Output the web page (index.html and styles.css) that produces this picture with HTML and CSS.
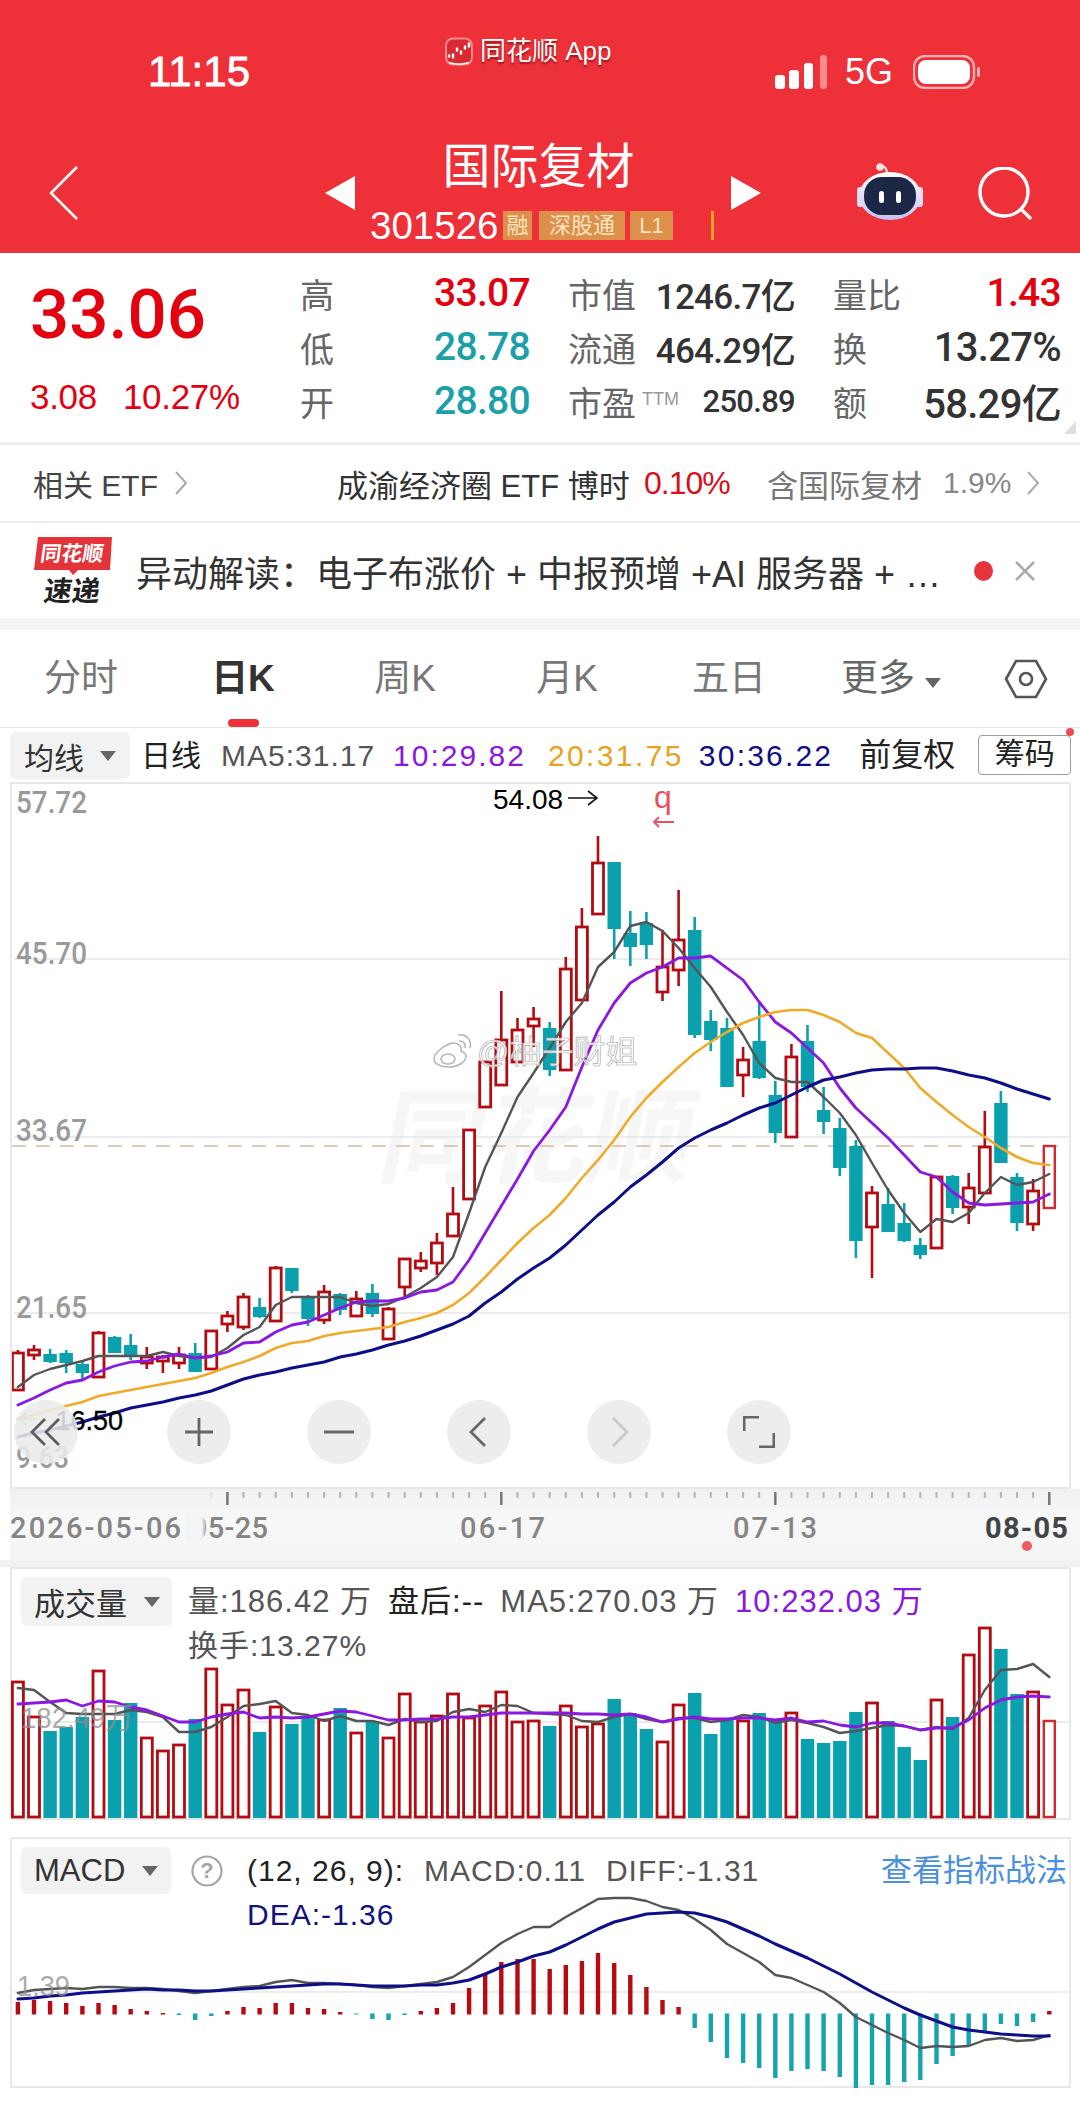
FILE: index.html
```html
<!DOCTYPE html>
<html lang="zh">
<head>
<meta charset="utf-8">
<title>国际复材</title>
<link rel="stylesheet" href="styles.css">
</head>
<body>
<div class="app">
  <header class="top">
    <div class="status">
      <span class="time">11:15</span>
      <div class="app-mark">
        <svg class="app-logo" viewBox="0 0 28 28"><rect x="1" y="1" width="26" height="26" rx="7" fill="#d92a33" stroke="#f78a8f" stroke-width="2"/><path d="M4 20v-3M8 21v-5M12 14v-4M16 17v-4M20 12V8M24 10V5" stroke="#fff" stroke-width="2.4" fill="none"/><path d="M4 25c6 2 14 2 20 0" stroke="#fff" stroke-width="1.5" fill="none"/></svg>
        <span class="app-name">同花顺 App</span>
      </div>
      <div class="status-right">
        <svg class="signal" viewBox="0 0 52 34"><rect x="0" y="20" width="10" height="14" rx="3" fill="#fff"/><rect x="14" y="15" width="10" height="19" rx="3" fill="#fff"/><rect x="29" y="8" width="9" height="26" rx="3" fill="#fff"/><rect x="45" y="0" width="7" height="34" rx="3" fill="#f78a8f"/></svg>
        <span class="net">5G</span>
        <svg class="battery" viewBox="0 0 68 34"><rect x="1" y="1" width="60" height="32" rx="11" fill="none" stroke="#fbb0b3" stroke-width="2.4"/><rect x="5" y="5" width="52" height="24" rx="8" fill="#fff"/><rect x="64" y="12" width="3" height="10" rx="1.5" fill="#fbb0b3"/></svg>
      </div>
    </div>
    <nav class="nav">
      <svg class="back" viewBox="0 0 30 56"><path d="M28 2 2 28l26 26" fill="none" stroke="#fff" stroke-width="2.6"/></svg>
      <svg class="tri tri-l" viewBox="0 0 30 34"><path d="M30 0v34L0 17z" fill="#fff"/></svg>
      <div class="title-block">
        <div class="stock-name">国际复材</div>
        <div class="code-row">
          <span class="code">301526</span>
          <span class="tag tag-rong">融</span>
          <span class="tag tag-sg">深股通</span>
          <span class="tag tag-l1">L1</span>
          <i class="code-bar"></i>
        </div>
      </div>
      <svg class="tri tri-r" viewBox="0 0 30 34"><path d="M0 0v34l30-17z" fill="#fff"/></svg>
      <svg class="robot" viewBox="0 0 66 58">
        <defs><linearGradient id="helmet" x1="0" y1="0" x2="0" y2="1"><stop offset="0" stop-color="#fff"/><stop offset="1" stop-color="#c5c3f2"/></linearGradient></defs>
        <path d="M30 11c0-6-2-8-7-8" fill="none" stroke="#f4dfe6" stroke-width="2.4"/><circle cx="23" cy="4" r="3.800" fill="#fbe4e8"/>
        <rect x="0" y="24" width="7" height="20" rx="3" fill="#dfdaf2"/><rect x="59" y="24" width="7" height="20" rx="3" fill="#dfdaf2"/>
        <ellipse cx="33" cy="33" rx="31" ry="24" fill="url(#helmet)"/>
        <rect x="7" y="14" width="52" height="38" rx="18" fill="#1c2745"/>
        <rect x="22" y="28" width="5" height="12" rx="2.500" fill="#fff"/><rect x="39" y="28" width="5" height="12" rx="2.500" fill="#fff"/>
      </svg>
      <svg class="search" viewBox="0 0 54 54"><circle cx="26" cy="25" r="24" fill="none" stroke="#fff" stroke-width="3.400"/><path d="M43 42l10 10" stroke="#fff" stroke-width="3.400"/></svg>
    </nav>
  </header>

  <section class="quote">
    <div class="quote-main">
      <div class="price">33.06</div>
      <div class="change"><span>3.08</span><span>10.27%</span></div>
    </div>
    <div class="quote-grid">
      <div class="cell"><span class="lab">高</span><span class="val red">33.07</span></div>
      <div class="cell"><span class="lab">市值</span><span class="val mid">1246.7亿</span></div>
      <div class="cell"><span class="lab">量比</span><span class="val red">1.43</span></div>
      <div class="cell"><span class="lab">低</span><span class="val teal">28.78</span></div>
      <div class="cell"><span class="lab">流通</span><span class="val mid">464.29亿</span></div>
      <div class="cell"><span class="lab">换</span><span class="val dark">13.27%</span></div>
      <div class="cell"><span class="lab">开</span><span class="val teal">28.80</span></div>
      <div class="cell"><span class="lab">市盈<sup class="ttm">TTM</sup></span><span class="val small">250.89</span></div>
      <div class="cell"><span class="lab">额</span><span class="val dark">58.29亿</span></div>
    </div>
    <i class="corner"></i>
  </section>

  <section class="etf">
    <span class="etf-rel">相关 ETF</span>
    <svg class="chev" viewBox="0 0 14 26"><path d="M2 2l10 11L2 24" fill="none" stroke="#aaa" stroke-width="2"/></svg>
    <span class="etf-name">成渝经济圈 ETF 博时</span>
    <span class="etf-pct">0.10%</span>
    <span class="etf-inc">含国际复材</span>
    <span class="etf-w">1.9%</span>
    <svg class="chev chev-end" viewBox="0 0 14 26"><path d="M2 2l10 11L2 24" fill="none" stroke="#aaa" stroke-width="2"/></svg>
  </section>

  <section class="news">
    <svg class="news-logo" viewBox="0 0 78 70">
      <path d="M4 1h74l-2 33H44l-5 5-4-5H0z" fill="#e5333a"/>
      <text class="news-logo-a" x="6" y="25" transform="skewX(-8) translate(3 0)">同花顺</text>
      <text class="news-logo-b" x="10" y="65" transform="skewX(-8) translate(8 0)">速递</text>
    </svg>
    <div class="news-text">异动解读：电子布涨价 + 中报预增 +AI 服务器 + …</div>
    <i class="news-dot"></i>
    <svg class="news-x" viewBox="0 0 20 20"><path d="M1 1l18 18M19 1 1 19" stroke="#aaa" stroke-width="2.600"/></svg>
  </section>

  <nav class="tabs">
    <span class="tab">分时</span>
    <span class="tab active">日K</span>
    <span class="tab">周K</span>
    <span class="tab">月K</span>
    <span class="tab">五日</span>
    <span class="tab tab-more">更多<i class="caret caret-sm"></i></span>
    <svg class="hex" viewBox="0 0 44 40"><path d="M12 2h20l10 18-10 18H12L2 20z" fill="none" stroke="#555" stroke-width="2.600"/><circle cx="22" cy="20" r="6" fill="none" stroke="#555" stroke-width="2.600"/></svg>
  </nav>

  <div class="ma-row">
    <span class="dd dd-ma">均线<i class="caret"></i></span>
    <span class="ma-t ma-day">日线</span>
    <span class="ma ma5">MA5:31.17</span>
    <span class="ma ma10">10:29.82</span>
    <span class="ma ma20">20:31.75</span>
    <span class="ma ma30">30:36.22</span>
    <span class="ma-t ma-adj">前复权</span>
    <span class="chips">筹码</span>
    <i class="chips-dot"></i>
  </div>

  <section class="panel kline">
    <svg class="chart" viewBox="10 782 1061 707" width="1061" height="707">
      <text class="wm-big" x="625" y="1175" transform="skewX(-12)">同花顺</text>
      <g class="grid"><path d="M14 959H1069M14 1137H1069M14 1313H1069"/></g>
      <path class="last-line" d="M12 1146H1066"/>
      <g id="kBody"></g>
      <text class="ax" x="16" y="813" textLength="71" lengthAdjust="spacingAndGlyphs">57.72</text>
      <text class="ax" x="16" y="964" textLength="71" lengthAdjust="spacingAndGlyphs">45.70</text>
      <text class="ax" x="16" y="1141" textLength="71" lengthAdjust="spacingAndGlyphs">33.67</text>
      <text class="ax" x="16" y="1318" textLength="71" lengthAdjust="spacingAndGlyphs">21.65</text>
      <text class="ax" x="16" y="1468" textLength="53" lengthAdjust="spacingAndGlyphs">9.63</text>
      <text class="peak" x="493" y="809">54.08</text>
      <path class="peak-arrow" d="M568 798H597m-9-7 9 7-9 7"/>
      <text class="mark" x="654" y="808">q</text>
      <path class="mark-arrow" d="M674 822H654m5-5-5 5 5 5"/>
      <path class="low-arrow" d="M37 1419H20m6-6-6 6 6 6"/>
      <text class="low" x="123" y="1430">16.50</text>
      <g class="weibo">
        <path d="M452 1043c-10 3-18 11-18 16 0 5 7 8 15 8 9 0 17-5 17-11 0-3-3-4-5-5 1-4-1-8-9-8z"/>
        <ellipse cx="448" cy="1059" rx="7" ry="5"/>
        <path d="M459 1041c4 0 7 2 6 7M458 1035c8-1 14 4 12 13"/>
        <text class="wb-text" x="477" y="1063">@柚子财姐</text>
      </g>
    </svg>
    <div class="tools">
      <span class="tool tool-first"><svg viewBox="0 0 32 32"><path d="M15 3 2 16l13 13M29 3 16 16l13 13" fill="none" stroke="#5c5c5c" stroke-width="2.800"/></svg></span>
      <span class="tool"><svg viewBox="0 0 32 32"><path d="M16 2v28M2 16h28" fill="none" stroke="#666" stroke-width="2.800"/></svg></span>
      <span class="tool"><svg viewBox="0 0 32 32"><path d="M1 16h30" fill="none" stroke="#666" stroke-width="3"/></svg></span>
      <span class="tool"><svg viewBox="0 0 32 32"><path d="M22 2 8 16l14 14" fill="none" stroke="#666" stroke-width="2.800"/></svg></span>
      <span class="tool"><svg viewBox="0 0 32 32"><path d="M10 2l14 14-14 14" fill="none" stroke="#c9c9c9" stroke-width="2.800"/></svg></span>
      <span class="tool"><svg viewBox="0 0 32 32"><path d="M1 15V1h15M31 17v14H16" fill="none" stroke="#666" stroke-width="3"/></svg></span>
    </div>
  </section>

  <div class="xaxis">
    <svg class="chart" viewBox="10 1489 1070 71" width="1070" height="71">
      <defs><linearGradient id="fade" x1="0" x2="1" y1="0" y2="0"><stop offset="0" stop-color="#f4f4f4"/><stop offset=".7" stop-color="#f4f4f4"/><stop offset="1" stop-color="#f4f4f4" stop-opacity="0"/></linearGradient></defs>
      <g id="ticks"></g>
      <text class="date" x="10" y="1538" textLength="171">2026-05-06</text>
      <text class="date" x="191" y="1538" textLength="77">05-25</text>
      <rect x="186" y="1512" width="22" height="30" fill="url(#fade)"/>
      <text class="date" x="460" y="1538" textLength="85">06-17</text>
      <text class="date" x="733" y="1538" textLength="84">07-13</text>
      <text class="date date-now" x="985" y="1538" textLength="83">08-05</text>
      <circle cx="1027" cy="1546" r="5" fill="#ee5a60"/>
    </svg>
  </div>
  <div class="gap"></div>

  <section class="panel vol">
    <svg class="chart chart-under" viewBox="10 1567 1061 253" width="1061" height="253">
      <path class="grid-line" d="M14 1722H1069"/>
      <g id="volBody"></g>
      <text class="ax-soft" x="21" y="1728" textLength="112" lengthAdjust="spacingAndGlyphs">182.49万</text>
    </svg>
    <div class="legend">
      <span class="dd dd-vol">成交量<i class="caret"></i></span>
      <div class="legend-text">
        <div class="legend-line legend-line-vol">
          <span class="c-gray">量:186.42 万</span>
          <span class="c-black">盘后:--</span>
          <span class="c-gray">MA5:270.03 万</span>
          <span class="c-purple">10:232.03 万</span>
        </div>
        <div class="legend-line"><span class="c-gray">换手:13.27%</span></div>
      </div>
    </div>
  </section>

  <div class="spacer"></div>

  <section class="panel macd">
    <svg class="chart chart-under" viewBox="10 1837 1061 251" width="1061" height="251">
      <path class="grid-line" d="M14 1992H1069"/>
      <g id="macdBody"></g>
      <text class="ax-soft" x="17" y="1996" textLength="53" lengthAdjust="spacingAndGlyphs">1.39</text>
    </svg>
    <div class="legend legend-macd">
      <span class="dd dd-macd">MACD<i class="caret"></i></span>
      <svg class="help" viewBox="0 0 32 32"><circle cx="16" cy="16" r="14.500" fill="none" stroke="#a5a5a5" stroke-width="2.200"/><text class="help-q" x="16" y="23">?</text></svg>
      <div class="legend-text legend-text-macd">
        <div class="legend-line">
          <span class="c-black">(12, 26, 9):</span>
          <span class="c-gray">MACD:0.11</span>
          <span class="c-gray">DIFF:-1.31</span>
          <span class="c-link">查看指标战法</span>
        </div>
        <div class="legend-line"><span class="c-navy">DEA:-1.36</span></div>
      </div>
    </div>
  </section>
  <div class="foot"></div>
</div>
<script src="script.js"></script>
</body>
</html>
```

FILE: styles.css
```css
* { box-sizing: border-box; }
html, body { margin: 0; padding: 0; background: #fff; }
body { font-family: "Liberation Sans", "Noto Sans CJK SC", sans-serif; color: #333; }
i { display: block; font-style: normal; }
svg { display: block; flex: none; }
.app { width: 1080px; height: 2106px; overflow: hidden; background: #fff; }

/* header */
.top { height: 253px; background: #ee3039; color: #fff; position: relative; }
.status { height: 140px; padding: 50px 99px 0 148px; display: flex; align-items: flex-start; }
.time { font-size: 42px; line-height: 44px; -webkit-text-stroke: .8px #fff; }
.app-mark { position: absolute; left: 445px; top: 33px; display: flex; align-items: center; gap: 7px; }
.app-logo { width: 28px; height: 29px; }
.app-name { font-size: 26px; line-height: 36px; text-shadow: 0 2px 2px rgba(90,0,0,.6); }
.status-right { margin-left: auto; display: flex; align-items: center; height: 44px; }
.signal { width: 52px; height: 34px; }
.net { margin-left: 18px; font-size: 36px; }
.battery { width: 68px; height: 34px; margin-left: 20px; }
.nav { display: flex; align-items: center; height: 105px; padding-left: 49px; }
.back { width: 30px; height: 56px; }
.tri { width: 30px; height: 34px; }
.tri-l { margin-left: 246px; }
.title-block { width: 376px; height: 105px; padding-left: 15px; }
.stock-name { font-size: 48px; line-height: 54px; text-align: center; padding-right: 24px; }
.code-row { display: flex; align-items: center; height: 29px; margin-top: 17px; }
.code { font-size: 38.5px; line-height: 29px; width: 133px; }
.tag { height: 29px; line-height: 29px; background: #dc9049; color: #fde4c4; font-size: 22px; text-align: center; }
.tag-rong { width: 29px; }
.tag-sg { width: 86px; margin-left: 7px; }
.tag-l1 { width: 43px; margin-left: 5px; }
.code-bar { width: 3px; height: 29px; margin-left: 38px; background: #f5a81f; }
.robot { width: 66px; height: 58px; margin-left: 96px; margin-top: -2px; }
.search { width: 54px; height: 54px; margin-left: 55px; margin-top: 2px; }

/* quote */
.quote { height: 192px; border-bottom: 3px solid #eeeeee; display: flex; padding-top: 13px; position: relative; }
.quote-main { width: 300px; padding: 14px 0 0 30px; }
.price { font-family: "Roboto", sans-serif; font-size: 69px; line-height: 70px; font-weight: 500; color: #e3000f; }
.change { margin-top: 23px; display: flex; gap: 26px; font-size: 35px; line-height: 47px; color: #e3000f; letter-spacing: -.3px; }
.quote-grid { display: grid; grid-template-columns: 230px 227px 228px; column-gap: 38px; grid-auto-rows: 54px; width: 760px; }
.cell { display: flex; align-items: center; justify-content: space-between; }
.lab { font-size: 34px; color: #666; white-space: nowrap; }
.ttm { font-size: 18px; color: #999; margin-left: 6px; vertical-align: 11px; line-height: 0; }
.val { font-size: 39px; font-family: "Roboto", "Noto Sans CJK SC", sans-serif; font-weight: 500; letter-spacing: -.7px; }
.val.mid { font-size: 35px; color: #333; }
.val.small { font-size: 31px; color: #333; }
.val.dark { color: #333; font-size: 40px; }
.red { color: #e3000f; }
.teal { color: #1b9fa8; }
.corner { position: absolute; right: 4px; bottom: 8px; width: 12px; height: 13px; background: #dedede; clip-path: polygon(100% 0, 100% 100%, 0 100%); }

/* etf */
.etf { height: 78px; border-bottom: 2px solid #eeeeee; padding-left: 33px; display: flex; align-items: center; font-size: 30px; color: #444; }
.etf-rel { width: 141px; }
.chev { width: 14px; height: 26px; }
.etf-name { margin-left: 149px; width: 307px; color: #333; font-size: 31px; white-space: nowrap; }
.etf-pct { color: #d9101c; font-size: 32px; letter-spacing: -1px; width: 123px; }
.etf-inc { color: #777; width: 176px; font-size: 31px; white-space: nowrap; }
.etf-w { color: #888; width: 83px; }
.news { height: 107px; border-bottom: 12px solid #f5f5f5; padding: 0 0 0 34px; display: flex; align-items: center; }
.news-logo { width: 78px; height: 70px; }
.news-logo-a { font-size: 21px; font-weight: 700; fill: #fff; }
.news-logo-b { font-size: 28px; font-weight: 700; fill: #222; }
.news-text { margin-left: 24px; width: 838px; font-size: 36px; color: #333; white-space: nowrap; }
.news-dot { width: 19px; height: 20px; border-radius: 50%; background: #e5343a; }
.news-x { width: 20px; height: 20px; margin-left: 22px; }

/* tabs */
.tabs { height: 98px; border-bottom: 1px solid #e8e8e8; display: grid; grid-template-columns: repeat(6, 162px) 1fr; align-items: center; }
.tab { position: relative; font-size: 37px; color: #777; line-height: 97px; text-align: center; }
.tab.active { color: #333; font-weight: 700; }
.tab.active::after { content: ""; position: absolute; left: 66px; bottom: 0; width: 31px; height: 8px; border-radius: 4px; background: #ee3039; }
.tab-more { color: #666; }
.caret-sm { display: inline-block; margin-left: 10px; vertical-align: 3px; }
.hex { width: 44px; height: 40px; margin-left: 32px; }

/* ma row */
.ma-row { height: 54px; padding: 4px 0 0 10px; display: flex; align-items: flex-start; position: relative; }
.dd { display: flex; align-items: center; background: #f2f2f2; border-radius: 6px; color: #333; }
.dd-ma { width: 120px; height: 47px; padding-left: 14px; font-size: 30px; justify-content: flex-start; gap: 16px; }
.caret { width: 0; height: 0; border-left: 8px solid transparent; border-right: 8px solid transparent; border-top: 10px solid #666; }
.ma-t { font-size: 30px; line-height: 47px; color: #222; white-space: nowrap; }
.ma { font-size: 30px; letter-spacing: 1px; line-height: 47px; white-space: nowrap; }
.ma-day { margin-left: 11px; }
.ma5 { color: #555; margin-left: 20px; }
.ma10 { color: #8a18de; margin-left: 18px; letter-spacing: 2px; }
.ma20 { color: #e9a21d; margin-left: 22px; letter-spacing: 2.400px; }
.ma30 { color: #0f0f85; margin-left: 15px; letter-spacing: 2.200px; }
.ma-adj { margin-left: 26px; font-size: 32px; }
.chips { margin: 3px 0 0 23px; width: 93px; height: 40px; border: 1.500px solid #9c9c9c; border-radius: 4px; font-size: 30px; line-height: 36px; text-align: center; color: #222; }
.chips-dot { position: absolute; right: 6px; top: 0; width: 8px; height: 8px; border-radius: 50%; background: #ec4a50; }

/* panels */
.panel { position: relative; width: 1061px; margin-left: 10px; outline: 2px solid #e8e8e8; outline-offset: -2px; }
.kline { height: 707px; }
.vol { height: 253px; }
.macd { height: 251px; }
.chart { display: block; overflow: visible; }
.chart-under { position: absolute; left: 0; top: 0; }
.grid path, .grid-line { stroke: #e6e6e6; stroke-width: 1.500; fill: none; }
.last-line { stroke: #d9b899; stroke-width: 1.500; stroke-dasharray: 14 10; fill: none; }
.wm-big { font-size: 104px; font-weight: 700; fill: #f6f6f6; }
.ax { font-family: "Roboto", sans-serif; font-size: 31px; font-weight: 500; fill: #9a9a9a; }
.ax-soft { font-size: 30px; fill: #8f8f8f; fill-opacity: .75; }
.peak { font-size: 28px; fill: #000; }
.peak-arrow { fill: none; stroke: #111; stroke-width: 1.600; }
.mark { font-size: 32px; fill: #e8505f; }
.mark-arrow { fill: none; stroke: #e8505f; stroke-width: 1.800; }
.low-arrow { fill: none; stroke: #a69a86; stroke-width: 1.600; }
.low { font-size: 27px; fill: #000; text-anchor: end; stroke: #000; stroke-width: .3px; }
.weibo path, .weibo ellipse { fill: rgba(255,255,255,.65); stroke: #b5b5b5; stroke-width: 1.500; }
.wb-text { font-size: 32px; fill: rgba(255,255,255,.78); stroke: #a9a9a9; stroke-width: .7px; }
.tools { position: absolute; left: 4px; top: 618px; display: flex; gap: 76px; }
.tool { width: 64px; height: 64px; border-radius: 50%; background: rgba(234,234,234,.88); display: flex; align-items: center; justify-content: center; }
.tool-first { margin-right: 13px; }
.tool svg { width: 32px; height: 32px; }

.xaxis { height: 71px; margin-left: 10px; background: linear-gradient(#f1f1f1, #f8f8f8 45%, #f4f4f4); }
.date { font-family: "Roboto", sans-serif; font-size: 29px; font-weight: 500; fill: #858585; }
.date-now { fill: #444; font-weight: 700; }
.gap { height: 7px; background: #f1f1f1; }

.legend { position: relative; display: flex; align-items: flex-start; padding: 10px 0 0 11px; }
.dd-vol { width: 151px; height: 49px; padding-left: 13px; font-size: 31px; gap: 17px; }
.dd-macd { width: 150px; height: 47px; padding-left: 13px; font-size: 31px; gap: 17px; }
.legend-text { margin: 3px 0 0 16px; flex: 1; }
.legend-line { display: flex; gap: 20px; font-size: 30px; line-height: 44px; letter-spacing: 1px; white-space: nowrap; }
.legend-line-vol { font-size: 31px; gap: 16px; }
.c-gray { color: #555; }
.c-black { color: #222; }
.c-purple { color: #8a18de; }
.c-navy { color: #12127f; }
.c-link { color: #4a90dc; margin-left: auto; margin-right: 4px; font-size: 31px; letter-spacing: 0; }
.help { width: 32px; height: 32px; margin: 8px 0 0 20px; }
.help-q { font-size: 22px; fill: #a5a5a5; text-anchor: middle; font-weight: 700; }
.legend-text-macd { margin: 2px 0 0 24px; }
.spacer { height: 17px; }
.foot { height: 18px; }

/* chart series */
.wick-up { stroke: #b30b12; stroke-width: 2.600; }
.wick-dn { stroke: #0ba0ae; stroke-width: 2.600; }
.body-up { fill: #fff; stroke: #b30b12; stroke-width: 2.800; }
.body-now { fill: #fff; stroke: #cf2a32; stroke-width: 2.400; }
.body-dn { fill: #0ba0ae; }
.hist-up { fill: #b80a12; }
.hist-dn { fill: #16a4ad; }
.ln { fill: none; stroke-linejoin: round; stroke-linecap: round; }
.l-ma5 { stroke: #555; stroke-width: 2.400; }
.l-ma10 { stroke: #8a18e0; stroke-width: 2.800; }
.l-ma20 { stroke: #f0aa28; stroke-width: 2.600; }
.l-ma30 { stroke: #0e0e88; stroke-width: 3; }
.tick { stroke: #b5b5b5; stroke-width: 2; }
.tick-major { stroke: #777; stroke-width: 2.500; }
```

FILE: script.js
```js
// Draws the K-line, volume and MACD series from day-by-day data (values are chart y pixels).
var X = function (i) { return +(17.9 + 16.115 * i).toFixed(1); };

// [kind, high, bodyTop, bodyBottom, low]
var candles = [
  ['u',1350,1353,1390,1390],['u',1345,1350,1355,1360],['d',1349,1354,1362,1363],['d',1350,1353,1363,1373],['d',1362,1364,1373,1381],
  ['u',1331,1333,1377,1377],['d',1336,1337,1353,1353],['d',1334,1345,1357,1360],['u',1347,1357,1363,1369],['u',1355,1357,1361,1373],
  ['u',1347,1355,1363,1369],['d',1343,1353,1372,1372],['u',1330,1331,1369,1369],['u',1311,1316,1324,1332],['u',1293,1297,1327,1330],
  ['d',1298,1307,1317,1318],['u',1266,1268,1321,1321],['d',1268,1268,1291,1293],['d',1295,1296,1319,1326],['u',1285,1292,1320,1324],
  ['d',1293,1294,1310,1315],['u',1291,1299,1316,1317],['d',1284,1293,1314,1317],['u',1307,1309,1339,1339],['u',1259,1259,1287,1297],
  ['u',1252,1261,1268,1272],['u',1233,1243,1263,1275],['u',1187,1214,1236,1236],['u',1130,1130,1199,1199],['u',1062,1062,1107,1107],
  ['u',991,1040,1085,1085],['u',1018,1030,1062,1062],['u',1007,1019,1026,1047],['d',1022,1028,1070,1076],['u',957,969,1070,1070],
  ['u',908,927,1000,1000],['u',836,863,914,914],['d',862,862,929,959],['d',911,933,947,966],['d',912,923,945,959],
  ['u',930,967,992,1001],['u',890,940,970,986],['d',917,930,1035,1038],['d',1010,1021,1040,1051],['d',1018,1028,1087,1087],
  ['u',1047,1060,1075,1097],['d',1002,1041,1078,1079],['d',1081,1095,1133,1143],['u',1044,1057,1137,1137],['d',1025,1041,1087,1092],
  ['d',1087,1110,1122,1134],['d',1118,1128,1168,1176],['d',1140,1146,1241,1258],['u',1186,1193,1227,1278],['d',1188,1204,1232,1232],
  ['d',1203,1223,1241,1242],['d',1238,1245,1255,1259],['u',1177,1177,1248,1248],['d',1175,1176,1208,1214],['u',1173,1188,1207,1224],
  ['u',1111,1147,1193,1193],['d',1091,1103,1163,1163],['d',1173,1177,1223,1231],['u',1179,1191,1224,1231],['n',1146,1146,1208,1208]
];

var ma5 = [1387,1375,1369,1365,1361,1356,1356,1356,1356,1352,1356,1358,1357,1348,1335,1327,1305,1297,1297,1297,1297,1303,1306,1304,1297,1288,1277,1257,1213,1167,1133,1097,1073,1048,1022,1003,967,952,926,922,931,948,968,987,1012,1035,1063,1078,1082,1082,1097,1113,1135,1163,1190,1213,1232,1219,1222,1213,1193,1177,1185,1182,1174];
var ma10 = [1405,1398,1390,1383,1380,1372,1366,1362,1361,1357,1354,1358,1356,1352,1343,1342,1332,1325,1322,1315,1308,1302,1301,1301,1298,1292,1290,1282,1260,1233,1206,1179,1151,1130,1107,1067,1030,1003,983,973,967,958,958,956,968,980,1002,1022,1033,1048,1063,1088,1108,1123,1138,1155,1172,1177,1192,1203,1205,1204,1203,1202,1194];
var ma20 = [1419,1415,1410,1406,1402,1396,1393,1390,1387,1384,1381,1378,1373,1367,1362,1356,1348,1343,1341,1336,1333,1331,1329,1327,1322,1318,1313,1305,1293,1277,1260,1243,1228,1215,1198,1178,1160,1140,1117,1098,1082,1067,1053,1042,1032,1023,1017,1012,1010,1010,1015,1022,1033,1038,1053,1068,1088,1102,1115,1127,1137,1148,1157,1163,1165];
var ma30 = [1437,1433,1430,1426,1422,1417,1413,1408,1405,1402,1398,1395,1391,1385,1379,1375,1372,1368,1365,1362,1357,1354,1350,1345,1341,1336,1330,1324,1316,1303,1292,1279,1268,1258,1245,1230,1215,1202,1187,1175,1162,1148,1138,1130,1123,1115,1108,1103,1095,1087,1080,1077,1073,1070,1069,1069,1068,1068,1071,1075,1078,1083,1089,1094,1099];

var volTop = [1682,1717,1731,1727,1717,1671,1720,1703,1738,1751,1745,1719,1669,1705,1690,1732,1707,1724,1717,1720,1708,1733,1721,1738,1694,1722,1716,1694,1718,1706,1692,1722,1721,1726,1706,1727,1724,1699,1713,1729,1742,1705,1693,1734,1720,1721,1713,1720,1713,1739,1743,1741,1712,1703,1721,1747,1760,1700,1717,1655,1628,1649,1694,1692,1721];
var volMa5 = [1688,1690,1702,1713,1714,1714,1714,1710,1712,1717,1732,1732,1727,1717,1706,1704,1701,1713,1715,1721,1716,1721,1721,1725,1719,1722,1721,1712,1709,1712,1705,1706,1713,1714,1715,1721,1722,1717,1714,1719,1722,1718,1718,1722,1720,1715,1717,1723,1720,1723,1727,1733,1731,1728,1725,1726,1730,1727,1729,1718,1690,1670,1669,1664,1677];
var volMa10 = [1704,1703,1702,1700,1706,1701,1702,1707,1710,1716,1722,1722,1717,1714,1712,1718,1717,1718,1717,1714,1711,1712,1716,1720,1720,1719,1719,1717,1717,1715,1713,1713,1713,1713,1713,1714,1714,1715,1714,1717,1722,1719,1717,1719,1719,1718,1718,1720,1718,1722,1721,1725,1727,1723,1723,1726,1730,1728,1728,1720,1708,1700,1697,1696,1697];

// MACD histogram ends (the other end sits on the 2014 baseline)
var histEnd = [2002,2000,2001,2003,2006,2003,2005,2009,2011,2013,2015,2020,2016,2011,2007,2008,2003,2003,2008,2009,2012,2014.5,2019,2020,2015,2011,2008,2003,1988,1973,1962,1959,1959,1969,1965,1961,1953,1963,1975,1987,2000,2007,2028,2042,2058,2063,2068,2078,2071,2069,2071,2077,2088,2085,2085,2082,2080,2064,2056,2045,2032,2024,2026,2022,2011];
var diff = [1993,1990,1989,1988,1989,1987,1987,1988,1988,1989,1991,1993,1991,1989,1987,1986,1982,1980,1983,1983,1984,1985,1987,1988,1986,1984,1982,1977,1967,1955,1943,1934,1927,1927,1917,1908,1899,1898,1898,1901,1907,1910,1919,1930,1944,1953,1962,1975,1978,1985,1992,2003,2017,2025,2033,2040,2048,2046,2047,2046,2040,2038,2041,2040,2035];
var dea = [1999,1998,1996,1995,1993,1992,1991,1990,1989,1990,1990,1991,1991,1990,1989,1988,1987,1986,1985,1984,1984,1985,1986,1986,1986,1985,1985,1983,1980,1974,1967,1962,1956,1952,1945,1937,1929,1922,1918,1914,1913,1912,1913,1917,1922,1929,1936,1944,1951,1958,1966,1974,1983,1992,2000,2008,2015,2021,2027,2030,2032,2034,2035,2036,2036];

function line(cls, ys) {
  var pts = ys.map(function (y, i) { return X(i) + ',' + y; }).join(' ');
  return '<polyline class="ln ' + cls + '" points="' + pts + '"/>';
}

var k = candles.map(function (c, i) {
  var x = X(i), up = c[0] !== 'd', s = '';
  var wick = up ? 'wick-up' : 'wick-dn';
  if (c[1] < c[2]) s += '<path class="' + wick + '" d="M' + x + ' ' + c[1] + 'V' + c[2] + '"/>';
  if (c[4] > c[3]) s += '<path class="' + wick + '" d="M' + x + ' ' + c[3] + 'V' + c[4] + '"/>';
  if (up) {
    s += '<rect class="' + (c[0] === 'n' ? 'body-now' : 'body-up') + '" x="' + (x - 5.5) + '" y="' + c[2] + '" width="11" height="' + (c[3] - c[2]) + '"/>';
  } else {
    s += '<rect class="body-dn" x="' + (x - 6.7) + '" y="' + c[2] + '" width="13.4" height="' + (c[3] - c[2]) + '"/>';
  }
  return s;
}).join('');
document.getElementById('kBody').innerHTML = k + line('l-ma5', ma5) + line('l-ma10', ma10) + line('l-ma20', ma20) + line('l-ma30', ma30);

var v = volTop.map(function (y, i) {
  var x = X(i), kind = candles[i][0];
  if (kind === 'd') return '<rect class="body-dn" x="' + (x - 6.7) + '" y="' + y + '" width="13.4" height="' + (1818 - y) + '"/>';
  return '<rect class="' + (kind === 'n' ? 'body-now' : 'body-up') + '" x="' + (x - 5.5) + '" y="' + y + '" width="11" height="' + (1817 - y) + '"/>';
}).join('');
document.getElementById('volBody').innerHTML = v + line('l-ma5', volMa5) + line('l-ma10', volMa10);

var h = histEnd.map(function (end, i) {
  var x = X(i) - 2.2, up = end < 2014;
  var top = up ? end : 2013.5, height = up ? 2014.5 - end : end - 2013.5;
  return '<rect class="' + (up ? 'hist-up' : 'hist-dn') + '" x="' + x + '" y="' + top + '" width="4.4" height="' + height + '"/>';
}).join('');
document.getElementById('macdBody').innerHTML = h + line('l-ma5', diff) + line('l-ma30', dea);

var t = '';
for (var i = 12; i < 65; i++) {
  var major = i === 13 || i === 30 || i === 47 || i === 64;
  t += '<path class="' + (major ? 'tick-major' : 'tick') + '" d="M' + X(i) + ' 1492V' + (major ? 1505 : 1498) + '"' + (i === 12 ? ' opacity=".3"' : '') + '/>';
}
document.getElementById('ticks').innerHTML = t;
```
